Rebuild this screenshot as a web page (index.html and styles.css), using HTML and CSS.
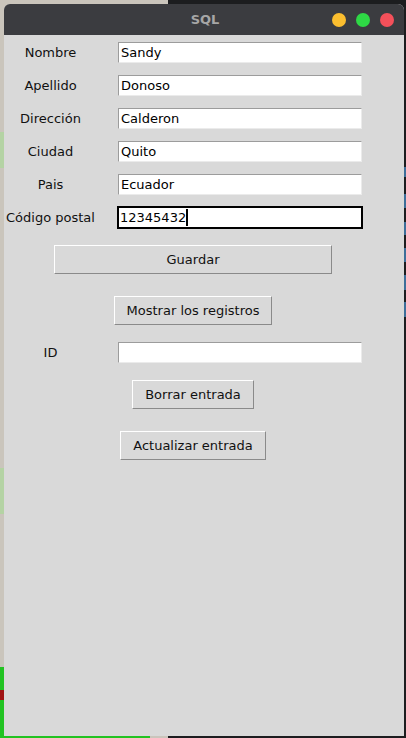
FILE: index.html
```html
<!DOCTYPE html>
<html lang="es">
<head>
<meta charset="utf-8">
<title>SQL</title>
<link rel="stylesheet" href="styles.css">
</head>
<body>
<div class="window">
  <div class="titlebar">
    <span></span>
    <span class="title">SQL</span>
    <div class="lights">
      <span class="light yellow"></span>
      <span class="light green"></span>
      <span class="light red"></span>
    </div>
  </div>
  <div class="content">
    <div class="fields">
      <span class="label">Nombre</span><span class="entry">Sandy</span>
      <span class="label">Apellido</span><span class="entry">Donoso</span>
      <span class="label">Dirección</span><span class="entry">Calderon</span>
      <span class="label">Ciudad</span><span class="entry">Quito</span>
      <span class="label">Pais</span><span class="entry">Ecuador</span>
      <span class="label">Código postal</span><span class="entry focused">12345432<span class="caret"></span></span>
    </div>
    <button class="btn wide">Guardar</button>
    <button class="btn gap-lg">Mostrar los registros</button>
    <div class="fields gap-md">
      <span class="label">ID</span><span class="entry"></span>
    </div>
    <button class="btn gap-md">Borrar entrada</button>
    <button class="btn gap-lg">Actualizar entrada</button>
  </div>
</div>
</body>
</html>
```
FILE: styles.css
```css
html, body {
  margin: 0;
  padding: 0;
}

body {
  width: 406px;
  height: 738px;
  box-sizing: border-box;
  padding: 4px 2px 2px 4px;
  overflow: hidden;
  font-family: "DejaVu Sans", sans-serif;
  background:
    linear-gradient(#b4d3a4, #b4d3a4) 0 132px / 4px 36px no-repeat,
    linear-gradient(#b4d3a4, #b4d3a4) 0 468px / 4px 46px no-repeat,
    linear-gradient(#a01414, #a01414) 0 690px / 4px 10px no-repeat,
    linear-gradient(#22c322, #22c322) 0 667px / 4px 71px no-repeat,
    linear-gradient(#22c322, #22c322) 0 736px / 150px 2px no-repeat,
    linear-gradient(#3d6e99, #3d6e99) 404px 167px / 2px 10px no-repeat,
    linear-gradient(#3d6e99, #3d6e99) 404px 194px / 2px 14px no-repeat,
    linear-gradient(#3d6e99, #3d6e99) 404px 222px / 2px 13px no-repeat,
    linear-gradient(#3d6e99, #3d6e99) 404px 248px / 2px 14px no-repeat,
    linear-gradient(#3d6e99, #3d6e99) 404px 275px / 2px 15px no-repeat,
    linear-gradient(#3d6e99, #3d6e99) 404px 302px / 2px 15px no-repeat,
    linear-gradient(to right, #cac5bc 0 168px, #1c1d1f 168px);
}

.window {
  width: 400px;
  height: 732px;
  display: flex;
  flex-direction: column;
  background: #d9d9d9;
  border-radius: 6px 6px 0 0;
  overflow: hidden;
}

.titlebar {
  height: 31px;
  flex: none;
  background: #3b3c40;
  display: grid;
  grid-template-columns: 1fr auto 1fr;
  align-items: center;
}

.title {
  color: #a6a6a6;
  font-weight: bold;
  font-size: 13px;
  padding-left: 2px;
}

.lights {
  justify-self: end;
  display: flex;
  gap: 10px;
  padding-right: 10px;
}

.light {
  width: 14px;
  height: 14px;
  border-radius: 50%;
}

.yellow { background: #fbbe2f; }
.green { background: #2ed845; }
.red { background: #f4505a; }

.content {
  width: 378px;
  display: flex;
  flex-direction: column;
  align-items: center;
  padding-top: 6px;
}

.fields {
  align-self: flex-start;
  display: grid;
  grid-template-columns: 93px 246px;
  column-gap: 20px;
  row-gap: 10px;
  align-items: center;
}

.label {
  justify-self: center;
  font-size: 13px;
  color: #111;
}

.entry {
  box-sizing: border-box;
  width: 244px;
  height: 21px;
  margin: 1px;
  background: #fff;
  border: 1px solid;
  border-color: #9c9c9c #ebebeb #ebebeb #9c9c9c;
  padding: 0 2px;
  font-size: 13px;
  line-height: 19px;
  color: #000;
  white-space: nowrap;
}

.entry.focused {
  width: 246px;
  height: 23px;
  margin: 0;
  border: 2px solid #000;
  padding: 0 1px;
}

.caret {
  display: inline-block;
  width: 2px;
  height: 17px;
  background: #000;
  vertical-align: middle;
  margin-top: -2px;
}

.btn {
  box-sizing: border-box;
  height: 29px;
  padding: 0 12px;
  margin: 16px 0 0;
  background: #d9d9d9;
  border: 1px solid;
  border-color: #fff #8a8a8a #8a8a8a #fff;
  border-radius: 0;
  font-family: "DejaVu Sans", sans-serif;
  font-size: 13px;
  color: #111;
}

.btn.wide {
  width: 278px;
}

.gap-lg {
  margin-top: 22px;
}

.gap-md {
  margin-top: 16px;
}
```
